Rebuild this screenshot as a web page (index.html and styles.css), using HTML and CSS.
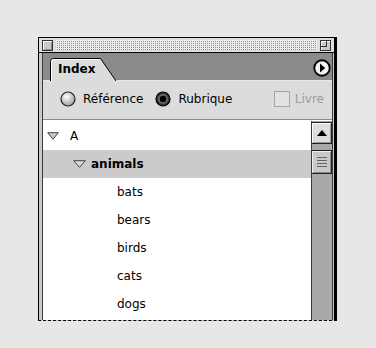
FILE: index.html
```html
<!DOCTYPE html>
<html lang="fr">
<head>
<meta charset="utf-8">
<title>Index</title>
<link rel="stylesheet" href="styles.css">
</head>
<body>
<div class="stage">
  <div class="window">
    <div class="titlebar">
      <span class="closebox"></span>
      <span class="grip"></span>
      <span class="zoombox"><span class="zoombox-inner"></span></span>
    </div>
    <div class="frame">
      <div class="inner">
        <div class="tabrow">
          <div class="tab">
            <svg class="tab-shape" width="67" height="23" viewBox="0 0 67 23">
              <path d="M0.5 23 V3.5 Q0.5 0.5 3.5 0.5 H50.5 L66 23" fill="#dcdcdc" stroke="#000" stroke-width="1"/>
              <path d="M1.5 23 V3.5 Q1.5 1.5 3.5 1.5 H50" fill="none" stroke="#fff" stroke-width="1"/>
            </svg>
            <span class="tab-label">Index</span>
          </div>
          <span class="menu-btn">
            <svg width="20" height="20" viewBox="0 0 20 20">
              <circle cx="10" cy="10" r="9" fill="#555"/>
              <circle cx="10" cy="10" r="7.6" fill="#f2f2f2" stroke="#000" stroke-width="1.6"/>
              <path d="M8 5.5 L13.2 10 L8 14.5 Z" fill="#000"/>
            </svg>
          </span>
        </div>
        <div class="options">
          <label class="opt">
            <svg class="radio" width="16" height="16" viewBox="0 0 16 16">
              <defs>
                <radialGradient id="rg1" cx="0.4" cy="0.35" r="0.7">
                  <stop offset="0" stop-color="#ffffff"/>
                  <stop offset="1" stop-color="#9a9a9a"/>
                </radialGradient>
              </defs>
              <circle cx="8" cy="8" r="7" fill="url(#rg1)" stroke="#222" stroke-width="1.2"/>
            </svg>
            <span>Référence</span>
          </label>
          <label class="opt opt-second">
            <svg class="radio" width="16" height="16" viewBox="0 0 16 16">
              <circle cx="8" cy="8" r="7" fill="#333" stroke="#000" stroke-width="1.2"/>
              <circle cx="8" cy="8" r="5" fill="#6a6a6a"/>
              <circle cx="8" cy="8" r="3.2" fill="#000"/>
            </svg>
            <span>Rubrique</span>
          </label>
          <label class="opt opt-disabled">
            <span class="check"></span>
            <span>Livre</span>
          </label>
        </div>
        <div class="listwrap">
          <ul class="list">
            <li class="row lvl0">
              <svg class="tri" width="12" height="8" viewBox="0 0 12 8"><path d="M0.7 0.7 H11.3 L6 7.3 Z" fill="#c8c8c8" stroke="#444" stroke-width="1"/></svg>
              <span>A</span>
            </li>
            <li class="row lvl1 selected">
              <svg class="tri" width="13" height="8" viewBox="0 0 13 8"><path d="M0.7 0.7 H12.3 L6.5 7.3 Z" fill="#d8d8d8" stroke="#444" stroke-width="1"/></svg>
              <span class="bold">animals</span>
            </li>
            <li class="row lvl2"><span>bats</span></li>
            <li class="row lvl2"><span>bears</span></li>
            <li class="row lvl2"><span>birds</span></li>
            <li class="row lvl2"><span>cats</span></li>
            <li class="row lvl2"><span>dogs</span></li>
          </ul>
          <div class="scrollbar">
            <div class="sb-arrow">
              <svg width="10" height="6" viewBox="0 0 10 6"><path d="M5 0 L10 6 H0 Z" fill="#000"/></svg>
            </div>
            <div class="sb-thumb">
              <i></i><i></i><i></i><i></i>
            </div>
          </div>
        </div>
      </div>
    </div>
  </div>
</div>
</body>
</html>
```
FILE: styles.css
```css
* { box-sizing: border-box; }

html, body {
  margin: 0;
  padding: 0;
  background: #e7e7e8;
}

body {
  font-family: "DejaVu Sans", "Liberation Sans", sans-serif;
  font-size: 12px;
  color: #000;
}

.stage {
  padding: 37px 0 0 38px;
  width: 376px;
  height: 348px;
}

.window {
  width: 299px;
  height: 284px;
  border: 1px solid #000;
  border-right: 3px solid #000;
  border-bottom: 1px dashed #000;
  display: flex;
  flex-direction: column;
  background: #cfcfcf;
}

/* title bar */
.titlebar {
  height: 15px;
  flex: 0 0 15px;
  border-bottom: 1px solid #000;
  background: #dedede;
  display: flex;
  align-items: center;
  padding: 0 3px 0 3px;
  gap: 3px;
}

.closebox {
  width: 11px;
  height: 11px;
  border: 1px solid #333;
  background: #c8c8c8;
  box-shadow: inset 1px 1px 0 #fff, inset -1px -1px 0 #888;
}

.grip {
  flex: 1;
  height: 10px;
  background-color: #ececec;
  background-image:
    linear-gradient(90deg, #ececec 50%, transparent 50%),
    linear-gradient(#ececec 50%, #8d8d8d 50%);
  background-size: 2px 2px;
}

.zoombox {
  width: 11px;
  height: 11px;
  border: 1px solid #333;
  background: #c8c8c8;
  box-shadow: inset 1px 1px 0 #fff;
  display: flex;
}

.zoombox-inner {
  width: 6px;
  height: 6px;
  border-right: 1px solid #333;
  border-bottom: 1px solid #333;
}

/* frame */
.frame {
  flex: 1;
  display: flex;
  padding: 0 1px 0 3px;
  background: #c9c9c9;
  min-height: 0;
}

.inner {
  flex: 1;
  display: flex;
  flex-direction: column;
  border-left: 1px solid #3a3a3a;
  border-right: 1px solid #3a3a3a;
  min-height: 0;
}

/* tab row */
.tabrow {
  flex: 0 0 27px;
  background: #8b8b8b;
  display: flex;
  align-items: flex-end;
  padding: 0 0 0 7px;
}

.tab {
  position: relative;
  width: 67px;
  height: 23px;
  margin-bottom: -1px;
}

.tab-shape {
  position: absolute;
  left: 0;
  top: 0;
}

.tab-label {
  position: relative;
  display: block;
  padding: 4px 0 0 8px;
  font-weight: bold;
  font-size: 12px;
  line-height: 14px;
}

.menu-btn {
  margin-left: auto;
  margin-right: 0;
  align-self: flex-start;
  margin-top: 5px;
  width: 20px;
  height: 20px;
  display: block;
}

.menu-btn svg { display: block; }

/* options */
.options {
  flex: 0 0 40px;
  background: #dcdcdc;
  display: flex;
  align-items: center;
  padding: 0 8px 2px 17px;
  border-bottom: 1px solid #8a8a8a;
  box-shadow: inset 0 1px 0 #e8e8e8;
}

.opt {
  display: flex;
  align-items: center;
  gap: 7px;
  font-size: 12px;
}

.radio { display: block; }

.opt-second { margin-left: 12px; }

.opt-disabled {
  margin-left: auto;
  color: #9c9c9c;
  gap: 5px;
}

.check {
  width: 16px;
  height: 16px;
  border: 1px solid #a5a5a5;
  background: #e2e2e2;
}

/* list */
.listwrap {
  flex: 1;
  display: flex;
  min-height: 0;
  background: #fff;
  border-top: 1px solid #fff;
  overflow: hidden;
}

.list {
  flex: 1;
  list-style: none;
  margin: 0;
  padding: 1px 0 0 0;
}

.row {
  height: 28px;
  display: flex;
  align-items: center;
  white-space: nowrap;
}

.row .tri { display: block; flex: 0 0 auto; }

.lvl0 { padding-left: 4px; }
.lvl0 .tri { margin-right: 11px; }

.lvl1 { padding-left: 30px; }
.lvl1 .tri { margin-right: 5px; }

.lvl2 { padding-left: 74px; }

.selected { background: #cbcbcb; }

.bold { font-weight: bold; }

/* scrollbar */
.scrollbar {
  flex: 0 0 21px;
  background: #a9a9a9;
  border-left: 1px solid #3a3a3a;
  display: flex;
  flex-direction: column;
  padding-top: 1px;
  gap: 6px;
}

.sb-arrow {
  height: 22px;
  background: #dedede;
  border: 1px solid #222;
  border-left: 0;
  box-shadow: inset 1px 1px 0 #fff, inset -1px -1px 0 #999;
  display: flex;
  align-items: center;
  justify-content: center;
}

.sb-arrow svg { display: block; margin-top: -1px; }

.sb-thumb {
  height: 24px;
  background: #c9c9c9;
  border: 1px solid #222;
  border-left: 0;
  box-shadow: inset 1px 1px 0 #eee, inset -1px -1px 0 #888;
  display: flex;
  flex-direction: column;
  align-items: center;
  justify-content: center;
  gap: 2px;
}

.sb-thumb i {
  display: block;
  width: 10px;
  height: 1px;
  background: #666;
}
```
